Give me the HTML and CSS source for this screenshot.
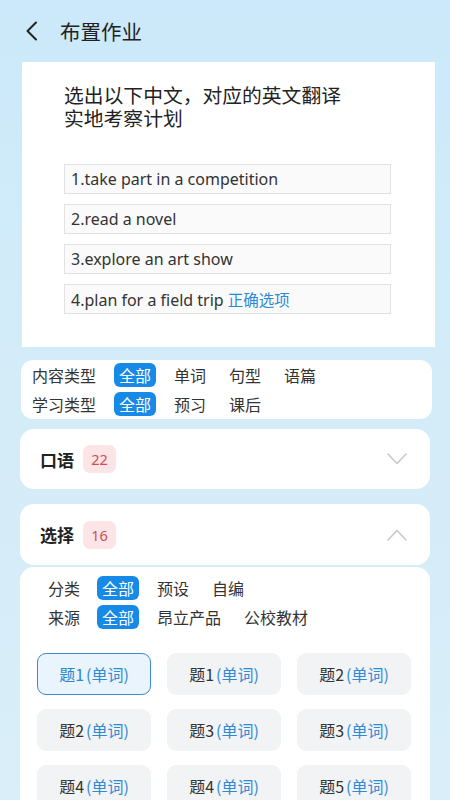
FILE: index.html
```html
<!DOCTYPE html>
<html lang="zh-CN">
<head>
    <meta charset="UTF-8">
    <meta name="viewport" content="width=device-width, initial-scale=1.0">
    <title>布置作业</title>
    <link rel="stylesheet" href="styles.css">
</head>
<body>
    <div class="header">
        <svg class="back" width="14" height="20" viewBox="0 0 14 20">
            <path d="M11 1.5 L2.5 10 L11 18.5" fill="none" stroke="#222" stroke-width="2" stroke-linecap="round" stroke-linejoin="round"/>
        </svg>
        <span class="title">布置作业</span>
    </div>

    <div class="question-card">
        <div class="question">选出以下中文，对应的英文翻译</div>
        <div class="question">实地考察计划</div>
        <div class="options">
            <div class="option">1.take part in a competition</div>
            <div class="option">2.read a novel</div>
            <div class="option">3.explore an art show</div>
            <div class="option">4.plan for a field trip <span class="correct">正确选项</span></div>
        </div>
    </div>

    <div class="filter-card">
        <div class="filter-row">
            <span class="filter-label">内容类型</span>
            <span class="chip active">全部</span>
            <span class="chip">单词</span>
            <span class="chip">句型</span>
            <span class="chip">语篇</span>
        </div>
        <div class="filter-row">
            <span class="filter-label">学习类型</span>
            <span class="chip active">全部</span>
            <span class="chip">预习</span>
            <span class="chip">课后</span>
        </div>
    </div>

    <div class="section">
        <span class="section-name">口语</span>
        <span class="count">22</span>
        <svg class="arrow" width="20" height="12" viewBox="0 0 20 12">
            <path d="M1 1 L10 10.5 L19 1" fill="none" stroke="#c9c9c9" stroke-width="1.6" stroke-linecap="round" stroke-linejoin="round"/>
        </svg>
    </div>

    <div class="section open">
        <span class="section-name">选择</span>
        <span class="count">16</span>
        <svg class="arrow" width="20" height="12" viewBox="0 0 20 12">
            <path d="M1 11 L10 1.5 L19 11" fill="none" stroke="#c9c9c9" stroke-width="1.6" stroke-linecap="round" stroke-linejoin="round"/>
        </svg>
    </div>

    <div class="list-card">
        <div class="sub-filters">
            <div class="filter-row">
                <span class="filter-label short">分类</span>
                <span class="chip active">全部</span>
                <span class="chip">预设</span>
                <span class="chip">自编</span>
            </div>
            <div class="filter-row">
                <span class="filter-label short">来源</span>
                <span class="chip active">全部</span>
                <span class="chip">昂立产品</span>
                <span class="chip">公校教材</span>
            </div>
        </div>
        <div class="grid">
            <div class="item selected">题1<span class="kind">(单词)</span></div>
            <div class="item">题1<span class="kind">(单词)</span></div>
            <div class="item">题2<span class="kind">(单词)</span></div>
            <div class="item">题2<span class="kind">(单词)</span></div>
            <div class="item">题3<span class="kind">(单词)</span></div>
            <div class="item">题3<span class="kind">(单词)</span></div>
            <div class="item">题4<span class="kind">(单词)</span></div>
            <div class="item">题4<span class="kind">(单词)</span></div>
            <div class="item">题5<span class="kind">(单词)</span></div>
        </div>
    </div>
</body>
</html>
```

FILE: styles.css
```css
body {
    margin: 0;
    height: 800px;
    overflow: hidden;
    font-family: "Noto Sans", "Noto Sans CJK SC", sans-serif;
    color: #333;
    background: linear-gradient(180deg, #cbe9fa 0%, #d4ecf8 50%, #d9eef9 100%);
}
.header {
    height: 62px;
    display: flex;
    align-items: center;
    padding-left: 25px;
    box-sizing: border-box;
}
.back {
    display: block;
}
.title {
    margin-left: 21px;
    font-size: 20.5px;
    color: #222;
    font-family: "Noto Sans CJK SC", sans-serif;
}
.question-card {
    margin: 0 15px 0 22px;
    background: #fff;
    padding: 23px 44px 33px 42px;
}
.question {
    font-family: "Liberation Sans", "Noto Sans CJK SC", sans-serif;
    font-size: 19.8px;
    line-height: 23px;
    color: #222;
}
.options {
    margin-top: 33px;
    display: flex;
    flex-direction: column;
    gap: 10px;
}
.option {
    height: 30px;
    box-sizing: border-box;
    border: 1px solid #e2e2e2;
    background: #fafafa;
    padding-left: 6px;
    font-size: 16px;
    line-height: 28px;
    color: #333;
}
.correct {
    color: #2b8ad6;
    font-family: "Noto Sans CJK SC", sans-serif;
    font-size: 15.5px;
}
.filter-card {
    margin: 13px 18px 0 21px;
    background: #fff;
    border-radius: 12px;
    padding: 3px 11px 3px;
    display: flex;
    flex-direction: column;
    gap: 5px;
}
.filter-row {
    display: flex;
    align-items: center;
    gap: 13px;
    font-family: "Noto Sans CJK SC", sans-serif;
    font-size: 16px;
}
.filter-label {
    width: 64px;
    margin-right: 5px;
    color: #333;
}
.filter-label.short {
    width: 32px;
    margin-right: 4px;
}
.chip {
    height: 24px;
    line-height: 24px;
    padding: 0 5px;
    border-radius: 6px;
    color: #333;
}
.chip.active {
    background: #1789e6;
    color: #fff;
}
.section {
    margin: 10px 20px 0 20px;
    height: 60px;
    background: #fff;
    border-radius: 14px;
    display: flex;
    align-items: center;
    padding: 0 23px 0 20px;
}
.section.open {
    margin-top: 15px;
    height: 61px;
}
.section-name {
    font-family: "Noto Sans CJK SC", sans-serif;
    font-size: 17px;
    font-weight: bold;
    color: #222;
}
.count {
    margin-left: 9px;
    width: 33px;
    height: 28px;
    line-height: 28px;
    text-align: center;
    border-radius: 7px;
    background: #fde4e7;
    color: #d14c52;
    font-size: 14.5px;
}
.arrow {
    margin-left: auto;
}
.list-card {
    margin: 2px 20px 0 20px;
    background: #fff;
    border-radius: 14px 14px 0 0;
    padding: 9px 19px 30px 17px;
}
.sub-filters {
    margin-left: 11px;
    display: flex;
    flex-direction: column;
    gap: 5px;
}
.grid {
    margin-top: 24px;
    display: grid;
    grid-template-columns: repeat(3, 114px);
    column-gap: 16px;
    row-gap: 14px;
}
.item {
    height: 42px;
    border-radius: 9px;
    background: #f2f3f5;
    display: flex;
    align-items: center;
    justify-content: center;
    font-family: "Noto Sans CJK SC", sans-serif;
    font-size: 16px;
    color: #333;
    box-sizing: border-box;
}
.kind {
    margin-left: 2px;
    color: #2e8ad4;
}
.item.selected {
    background: #e9f4fd;
    border: 1.5px solid #3b8bcd;
    color: #2e86cc;
}
```
